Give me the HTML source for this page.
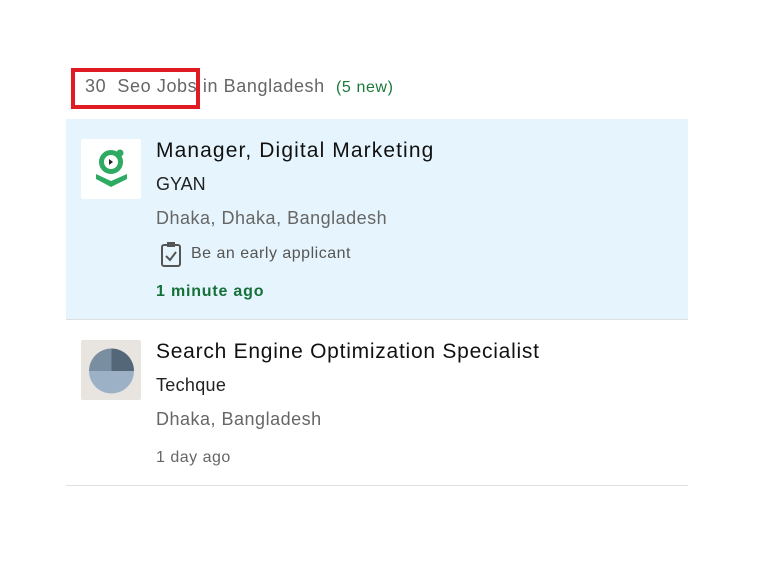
<html><head><style>
body{margin:0;width:770px;height:564px;background:#fff;font-family:"Liberation Sans",sans-serif;position:relative;overflow:hidden}
.a{position:absolute;white-space:nowrap}
</style></head><body>
<div class="a" style="left:71px;top:68px;width:121px;height:33px;border:4px solid #e01b24"></div>
<div class="a" style="left:85px;top:76px;font-size:18px;color:#666;letter-spacing:0.6px">30&nbsp; Seo Jobs in Bangladesh &nbsp;<span style="font-size:16px;color:#1a7a3a">(5 new)</span></div>
<div class="a" style="left:66px;top:119px;width:622px;height:200px;background:#e6f5fd;border-bottom:1px solid #e0e0e0"></div>
<div class="a" style="left:81px;top:139px;width:60px;height:60px;background:#fff;border-radius:2px">
<svg width="60" height="60" viewBox="0 0 60 60"><circle cx="30" cy="23" r="9.5" fill="none" stroke="#2eaa63" stroke-width="5"/><circle cx="39" cy="14" r="3.5" fill="#2eaa63"/><path d="M28 20 L32 23 L28 26Z" fill="#222"/><path d="M15 35 L30 42 L46 35 L46 40 L30 48 L15 40Z" fill="#2eaa63"/></svg></div>
<div class="a" style="left:156px;top:139px;font-size:21px;color:#111;letter-spacing:1.1px">Manager, Digital Marketing</div>
<div class="a" style="left:156px;top:174px;font-size:18px;color:#222">GYAN</div>
<div class="a" style="left:156px;top:208px;font-size:18px;color:#666;letter-spacing:0.5px">Dhaka, Dhaka, Bangladesh</div>
<svg class="a" style="left:160px;top:241px" width="22" height="26" viewBox="0 0 22 26"><rect x="2" y="4" width="18" height="21" rx="2" fill="none" stroke="#555" stroke-width="2"/><rect x="7" y="1" width="8" height="5" fill="#555"/><path d="M6 15 L10 19 L16 11" fill="none" stroke="#555" stroke-width="2"/></svg>
<div class="a" style="left:191px;top:245px;font-size:16px;color:#555;letter-spacing:0.5px">Be an early applicant</div>
<div class="a" style="left:156px;top:283px;font-size:16px;font-weight:bold;color:#16703a;letter-spacing:0.8px">1 minute ago</div>
<div class="a" style="left:81px;top:340px;width:60px;height:60px;background:#e8e4df;border-radius:2px">
<svg width="60" height="60" viewBox="0 0 60 60"><path d="M8 31 A22.5 22.5 0 0 0 53 31Z" fill="#9cb1c6"/><path d="M30.5 8.5 A22.5 22.5 0 0 0 8 31 L30.5 31Z" fill="#7a8ea2"/><path d="M30.5 8.5 A22.5 22.5 0 0 1 53 31 L30.5 31Z" fill="#546778"/></svg></div>
<div class="a" style="left:156px;top:340px;font-size:21px;color:#111;letter-spacing:0.75px">Search Engine Optimization Specialist</div>
<div class="a" style="left:156px;top:375px;font-size:18px;color:#222;letter-spacing:0.3px">Techque</div>
<div class="a" style="left:156px;top:409px;font-size:18px;color:#666;letter-spacing:0.5px">Dhaka, Bangladesh</div>
<div class="a" style="left:156px;top:449px;font-size:16px;color:#666;letter-spacing:0.5px">1 day ago</div>
<div class="a" style="left:66px;top:485px;width:622px;height:1px;background:#e0e0e0"></div>
</body></html>
